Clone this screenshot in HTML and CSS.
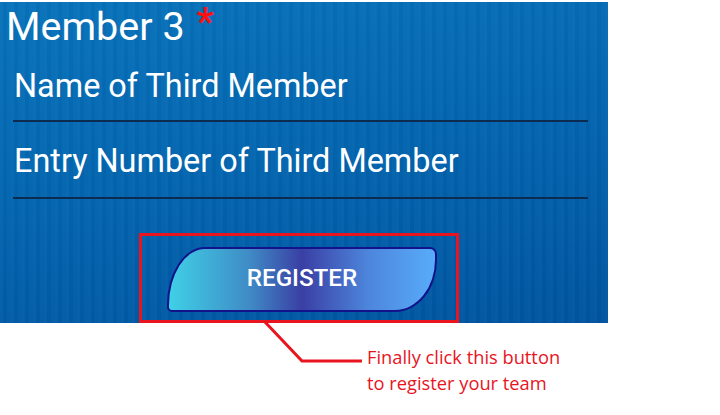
FILE: index.html
```html
<!DOCTYPE html>
<html>
<head>
<meta charset="utf-8">
<link rel="stylesheet" href="styles.css">
</head>
<body>
<div class="page">
  <section class="panel">
    <h1 class="title">Member 3 <span class="req">*</span></h1>
    <div class="field">Name of Third Member</div>
    <div class="field">Entry Number of Third Member</div>
    <div class="highlight">
      <button class="register">REGISTER</button>
    </div>
  </section>
  <p class="note">Finally click this button<br>to register your team</p>
  <svg class="connector" width="720" height="415" viewBox="0 0 720 415">
    <polyline points="265,322 302,361 362,361" fill="none" stroke="#e8141e" stroke-width="3"/>
  </svg>
</div>
</body>
</html>
```
FILE: styles.css
```css
html, body {
  margin: 0;
  padding: 0;
  background: #ffffff;
}
.page {
  position: relative;
  width: 720px;
  height: 415px;
  padding-top: 2px;
  box-sizing: border-box;
}
.panel {
  width: 608px;
  height: 321px;
  box-sizing: border-box;
  padding: 0 20px 0 13px;
  background:
    repeating-linear-gradient(90deg, rgba(255,255,255,0.025) 0 3px, rgba(0,0,0,0.025) 3px 7px, rgba(255,255,255,0.015) 7px 11px),
    linear-gradient(170deg, #0873bb 0%, #0366b0 45%, #0054a0 100%);
  font-family: Roboto, "Noto Sans", sans-serif;
  color: #ffffff;
  display: flex;
  flex-direction: column;
}
.title {
  margin: 0 0 0 -7px;
  font-weight: 400;
  font-size: 39.5px;
  line-height: 50px;
  height: 50px;
}
.req {
  color: #ff1010;
  font-size: 38px;
  font-weight: 700;
  vertical-align: 5px;
  line-height: 0;
  margin-left: 2px;
}
.field {
  font-size: 32.4px;
  line-height: 68px;
  height: 68px;
  padding-left: 1px;
  border-bottom: 2px solid #0b2c50;
  margin-bottom: -1px;
}
.field + .field {
  height: 76px;
  line-height: 80px;
}
.highlight {
  margin: 35px 0 0 126px;
  width: 320px;
  height: 90px;
  box-sizing: border-box;
  border: 3px solid #e8141e;
  display: flex;
  align-items: center;
  justify-content: center;
  padding-left: 6px;
  padding-top: 2px;
}
.register {
  width: 270px;
  height: 65px;
  border: 2px solid #12128a;
  border-radius: 38px 7px 42px 5px / 58px 7px 52px 5px;
  background: linear-gradient(90deg, #3fd0e6 0%, #3f8cc6 30%, #3a3fa4 50%, #4d86dc 75%, #58acfa 100%);
  color: #ffffff;
  font-family: Roboto, "Noto Sans", sans-serif;
  font-weight: 500;
  font-size: 24.2px;
  padding: 0 0 2px 0;
}
.note {
  margin: 21px 0 0 367px;
  font-family: "Open Sans", "Liberation Sans", sans-serif;
  font-size: 18.3px;
  line-height: 26px;
  color: #e8141e;
}
.connector {
  position: absolute;
  left: 0;
  top: 0;
  pointer-events: none;
}
```
